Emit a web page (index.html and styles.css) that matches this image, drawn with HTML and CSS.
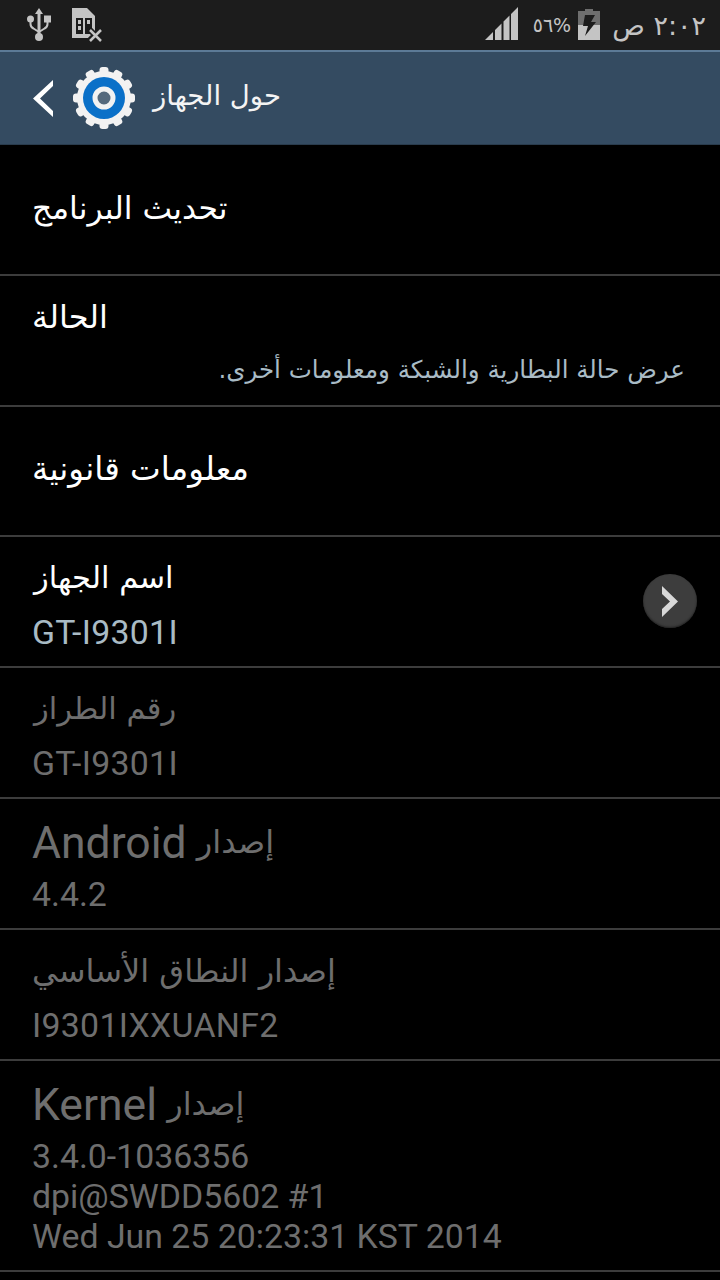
FILE: index.html
```html
<!DOCTYPE html>
<html lang="ar">

<head>
  <meta charset="UTF-8">
  <meta name="viewport" content="width=device-width, initial-scale=1.0">
  <title>حول الجهاز</title>
  <link rel="stylesheet" href="styles.css">
</head>

<body>
  <div class="status-bar">
    <div class="status-left">
      <svg class="icon-usb" width="26" height="36" viewBox="0 0 26 36">
        <path d="M13 1l4 6h-2.500v19.500a2 2 0 0 1 0 .5h-3v-.5V7H9z" fill="#c4c4c4" />
        <circle cx="13" cy="30" r="4" fill="#c4c4c4" />
        <circle cx="4.500" cy="12" r="3.500" fill="#c4c4c4" />
        <rect x="18" y="8.500" width="7" height="7" fill="#c4c4c4" />
        <path d="M4.500 14v3q0 3 3 4.500l5.500 3.500M21.500 14v3q0 3-3 4.500L13 25" fill="none" stroke="#c4c4c4" stroke-width="2" />
      </svg>
      <svg class="icon-sim" width="32" height="34" viewBox="0 0 32 34">
        <path d="M0 0h15l8 8v22H0z" fill="#c4c4c4" />
        <path d="M4 10h16v16H4z" fill="#1c1c1c" />
        <path d="M6 12h3v4H6zM6 18h3v4H6zM11 10h2v16h-2zM15 12h3v4h-3z" fill="#c4c4c4" />
        <path d="M17 21l12 12M29 21L17 33" stroke="#1c1c1c" stroke-width="6" />
        <path d="M18 22l11 11M29 22L18 33" stroke="#c4c4c4" stroke-width="2.500" />
      </svg>
    </div>
    <div class="status-right">
      <svg class="icon-signal" width="33" height="33" viewBox="0 0 33 33">
        <path d="M0 33l8-8v8zM10 33V23l6.500-6.500V33zM18.500 33V14.500l6-6V33zM26 33V7l7-7v33z" fill="#c4c4c4" />
      </svg>
      <span class="battery-text">٥٦%</span>
      <svg class="icon-battery" width="22" height="32" viewBox="0 0 22 32">
        <path d="M7 0h8v3H7z" fill="#6e6e6e" />
        <path d="M0 2h22v14H0z" fill="#6e6e6e" />
        <path d="M0 16h22v15H0z" fill="#c4c4c4" />
        <path d="M7 6h10l-4 7h5L7 27l3-10H5z" fill="#1c1c1c" />
      </svg>
      <span class="clock-text">٢:٠٢ ص</span>
    </div>
  </div>

  <div class="action-bar">
    <svg class="icon-back" width="20" height="37" viewBox="0 0 20 37">
      <path d="M20 0L0 18.500 20 37v-6L7 18.500 20 6z" fill="#fff" />
    </svg>
    <svg class="icon-gear" width="64" height="62" viewBox="0 0 64 62">
      <g fill="#f2f2f2">
        <circle cx="32" cy="31" r="27" />
        <rect x="27.500" y="0" width="9" height="62" rx="3" />
        <rect x="27.500" y="0" width="9" height="62" rx="3" transform="rotate(30 32 31)" />
        <rect x="27.500" y="0" width="9" height="62" rx="3" transform="rotate(60 32 31)" />
        <rect x="27.500" y="0" width="9" height="62" rx="3" transform="rotate(90 32 31)" />
        <rect x="27.500" y="0" width="9" height="62" rx="3" transform="rotate(120 32 31)" />
        <rect x="27.500" y="0" width="9" height="62" rx="3" transform="rotate(150 32 31)" />
      </g>
      <circle cx="32" cy="31" r="21" fill="#0a70c8" />
      <circle cx="32" cy="31" r="9" fill="#55697c" stroke="#f2f2f2" stroke-width="5" />
    </svg>
    <span class="action-title">حول الجهاز</span>
  </div>

  <div class="list">
    <div class="row row-single">
      <div class="row-title title-compact">تحديث البرنامج</div>
    </div>
    <div class="row">
      <div class="row-title">الحالة</div>
      <div class="row-note">عرض حالة البطارية والشبكة ومعلومات أخرى.</div>
    </div>
    <div class="row row-single row-short">
      <div class="row-title title-wide">معلومات قانونية</div>
    </div>
    <div class="row">
      <div class="row-title title-narrow">اسم الجهاز</div>
      <div class="row-value value-spaced">GT-I9301I</div>
      <span class="row-arrow">
        <svg width="16" height="31" viewBox="0 0 16 31">
          <path d="M0 0l16 15.500L0 31v-8l8-7.500L0 8z" fill="#d8d8d8" />
        </svg>
      </span>
    </div>
    <div class="row disabled">
      <div class="row-title title-narrow">رقم الطراز</div>
      <div class="row-value value-spaced">GT-I9301I</div>
    </div>
    <div class="row disabled">
      <div class="row-title title-mixed" dir="rtl">إصدار <span class="latin">Android</span></div>
      <div class="row-value">4.4.2</div>
    </div>
    <div class="row disabled">
      <div class="row-title">إصدار النطاق الأساسي</div>
      <div class="row-value value-spaced">I9301IXXUANF2</div>
    </div>
    <div class="row disabled row-kernel">
      <div class="row-title title-mixed" dir="rtl">إصدار <span class="latin">Kernel</span></div>
      <div class="row-value">3.4.0-1036356<br>dpi@SWDD5602 #1<br>Wed Jun 25 20:23:31 KST 2014</div>
    </div>
  </div>
</body>

</html>
```

FILE: styles.css
```css
* {
  box-sizing: border-box;
}

html,
body {
  background: #000;
  margin: 0;
  padding: 0;
}

body {
  font-family: "DejaVu Sans", Roboto, sans-serif;
  height: 1280px;
  overflow: hidden;
  width: 720px;
}

.status-bar {
  align-items: center;
  background: #1c1c1c;
  color: #c4c4c4;
  display: flex;
  height: 50px;
  justify-content: space-between;
  padding: 0 14px 0 26px;
}

.status-left {
  align-items: center;
  display: flex;
  gap: 20px;
}

.status-right {
  align-items: center;
  display: flex;
}

.icon-signal {
  margin-top: -4px;
}

.battery-text {
  font-size: 19px;
  margin-left: 15px;
}

.icon-battery {
  margin-left: 7px;
}

.clock-text {
  direction: rtl;
  font-size: 27px;
  margin-left: 12px;
}

.action-bar {
  align-items: center;
  background: #344b61;
  border-bottom: 1px solid #2a3c4d;
  border-top: 2px solid #5c7a96;
  display: flex;
  height: 95px;
  padding-left: 33px;
}

.icon-back {
  flex: none;
}

.icon-gear {
  flex: none;
  margin-left: 19px;
}

.action-title {
  color: #f4f4f4;
  font-size: 27.5px;
  margin-left: 17px;
  padding-bottom: 6px;
}

.row {
  border-bottom: 2px solid #3c3c3c;
  display: flex;
  flex-direction: column;
  height: 131px;
  padding: 21px 32px 0;
  position: relative;
}

.row-single {
  justify-content: center;
  padding-bottom: 4px;
  padding-top: 0;
}

.row-short {
  height: 130px;
}

.row-title {
  align-self: flex-start;
  color: #fff;
  font-size: 32px;
  height: 40px;
  line-height: 40px;
}

.title-compact {
  font-size: 31.400px;
}

.title-wide {
  font-size: 32.600px;
}

.title-narrow {
  font-size: 30.500px;
  margin-left: 2px;
}

.title-mixed {
  padding-top: 2px;
}

.row-note {
  color: #a9bbc5;
  direction: rtl;
  font-size: 24.500px;
  line-height: 40px;
  margin-right: 3px;
  margin-top: 13px;
}

.row-value {
  color: #a9bbc5;
  font-family: Roboto, sans-serif;
  font-size: 33.850px;
  line-height: 40px;
  margin-top: 15px;
}

.value-spaced {
  letter-spacing: .3px;
}

.latin {
  font-family: Roboto, sans-serif;
  font-size: 44.500px;
  line-height: 40px;
  vertical-align: -5px;
}

.row-arrow {
  align-items: center;
  background: #3d3d3d;
  border-radius: 50%;
  box-shadow: inset 0 -1px 2px #222;
  display: flex;
  height: 54px;
  justify-content: center;
  position: absolute;
  right: 23px;
  top: 37px;
  width: 54px;
}

.disabled .row-title,
.disabled .row-value {
  color: #6e6e6e;
}

.row-kernel {
  height: 211px;
}
```
